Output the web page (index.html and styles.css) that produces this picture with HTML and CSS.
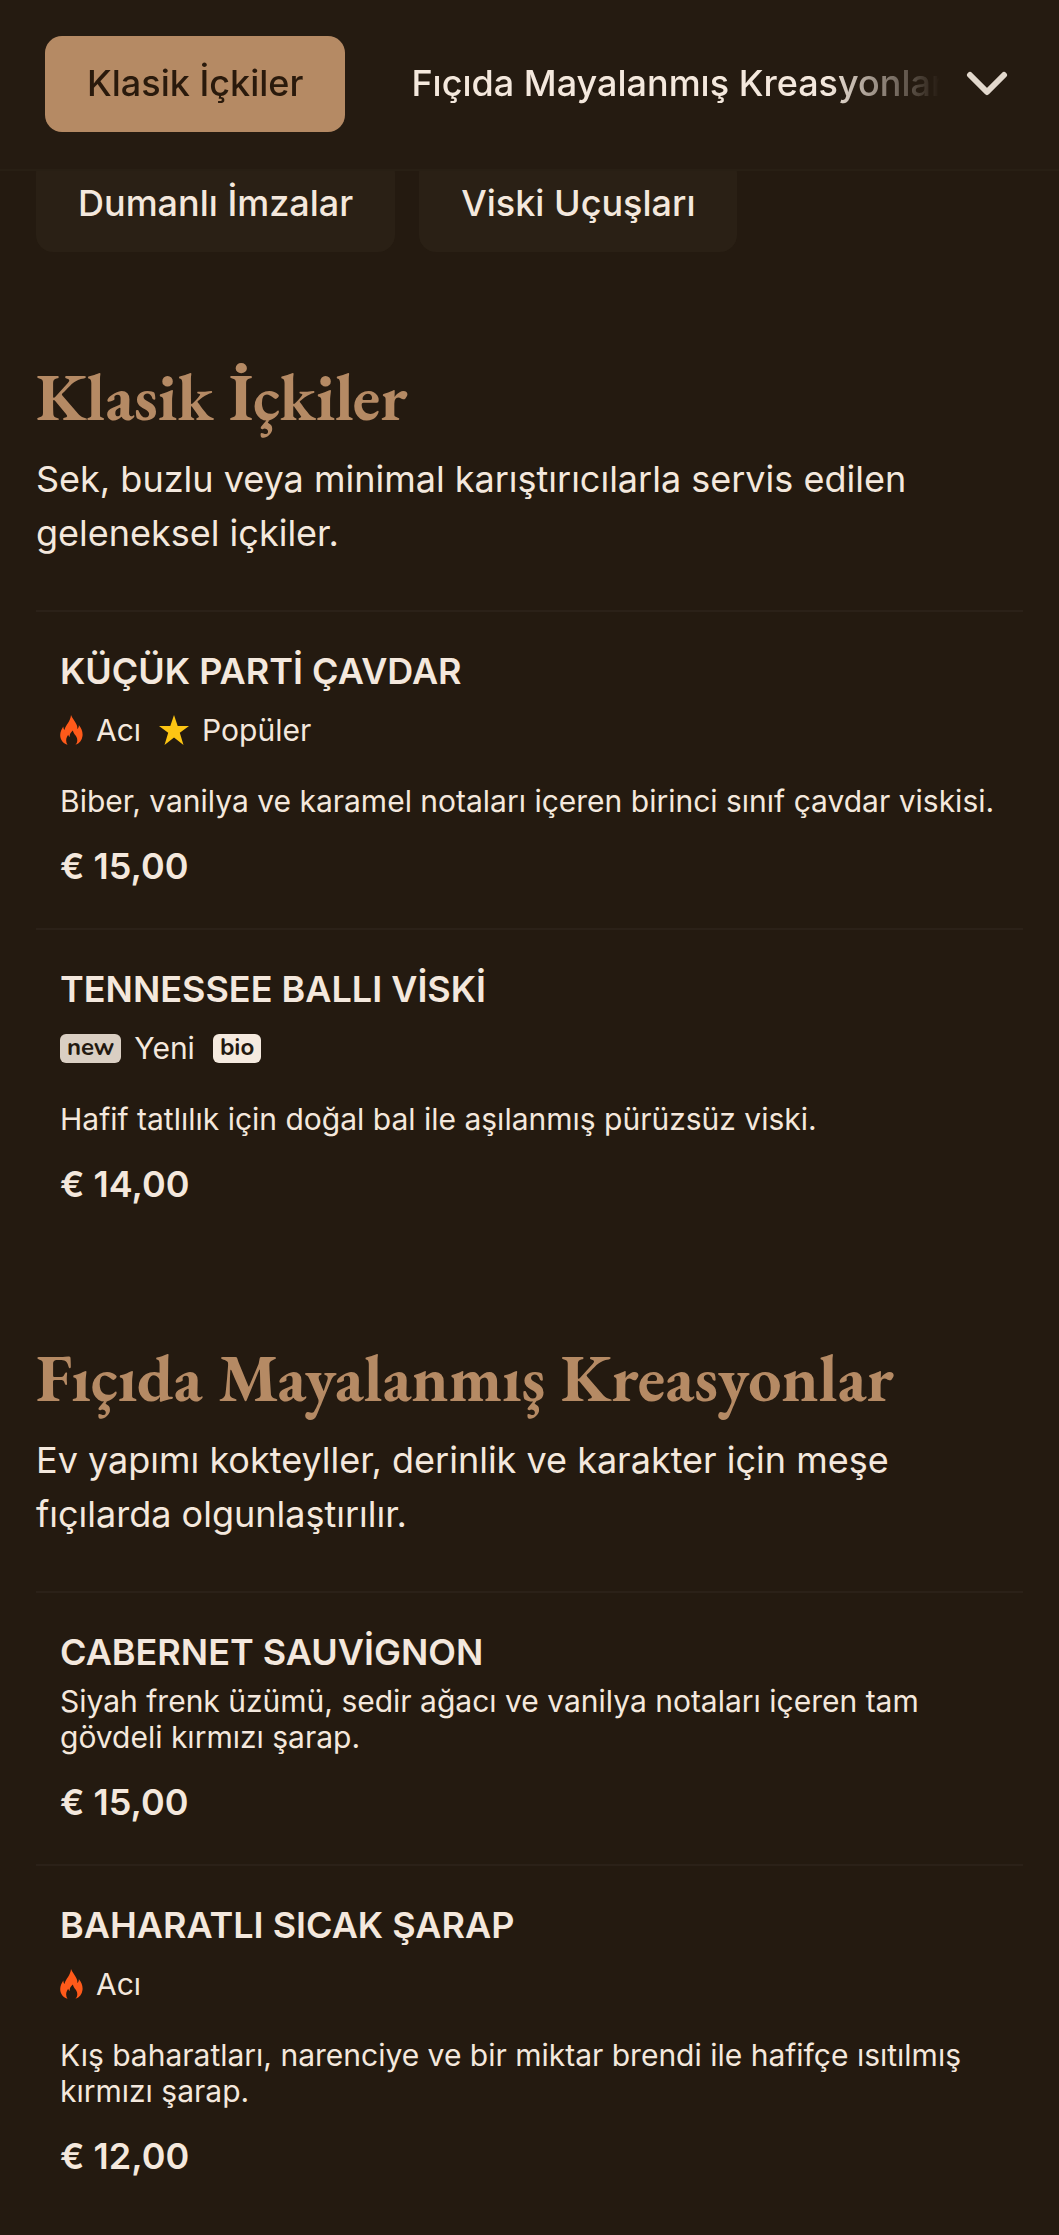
FILE: index.html
```html
<!DOCTYPE html>
<html lang="tr">
<head>
    <meta charset="UTF-8">
    <meta name="viewport" content="width=device-width, initial-scale=1.0">
    <title>Klasik İçkiler</title>
    <link rel="stylesheet" href="styles.css">
</head>
<body>

<!-- shared icons -->
<svg class="sprite" aria-hidden="true">
    <symbol id="flame" viewBox="0 0 23 30">
        <path fill="#ff5a1a" d="M11 0C12 3 15 6 16.500 9.500C17.300 11 17.500 12.500 17.300 14C18.500 13 19 11.500 18.800 10C21.500 13.500 23 17 22.500 21C22 25.500 19.500 28.500 15.500 29.800C17.500 27.500 17.800 24.500 16.500 22C15.500 20 13.500 18.500 12.800 15.500C10.500 17.500 9.500 19.500 9.700 22C8.800 21.500 8.400 20.700 8.300 19.800C6 22.500 5.300 26.500 7.500 29.800C3.500 28.500 .8 25.500 .3 21.500C-.2 17.500 1.500 14.500 3.300 11.500C3.400 13 3.700 14 4.500 15C5.800 9.500 10.500 6.500 11 0Z"/>
    </symbol>
    <symbol id="star" viewBox="0 0 30 30">
        <path fill="#fdc513" d="M15 0L18.700 11H30L20.800 17.700L24.500 30L15 22.500L5.500 30L9.200 17.700L0 11H11.300Z"/>
    </symbol>
</svg>

<header class="topbar">
    <nav class="tabs">
        <a class="tab active" href="#klasik">Klasik İçkiler</a>
        <a class="tab" href="#fici">Fıçıda Mayalanmış Kreasyonlar</a>
    </nav>
    <button class="toggle" type="button" aria-label="Kategoriler">
        <svg width="42" height="26" viewBox="0 0 42 26" aria-hidden="true">
            <path d="M4 4L21 21L38 4" fill="none" stroke="currentColor" stroke-width="6" stroke-linecap="round" stroke-linejoin="round"/>
        </svg>
    </button>
</header>

<main class="menu">
    <nav class="chips">
        <a class="chip" href="#dumanli">Dumanlı İmzalar</a>
        <a class="chip" href="#viski">Viski Uçuşları</a>
    </nav>

    <section class="category" id="klasik">
        <h2>Klasik İçkiler</h2>
        <p class="intro">Sek, buzlu veya minimal karıştırıcılarla servis edilen geleneksel içkiler.</p>

        <article class="item">
            <h3>KÜÇÜK PARTİ ÇAVDAR</h3>
            <ul class="labels">
                <li><svg class="flame" aria-hidden="true"><use href="#flame"/></svg>Acı</li>
                <li><svg class="star" aria-hidden="true"><use href="#star"/></svg>Popüler</li>
            </ul>
            <p class="desc">Biber, vanilya ve karamel notaları içeren birinci sınıf çavdar viskisi.</p>
            <p class="price">€ 15,00</p>
        </article>

        <article class="item">
            <h3>TENNESSEE BALLI VİSKİ</h3>
            <ul class="labels">
                <li><span class="badge badge-new">new</span>Yeni</li>
                <li><span class="badge">bio</span></li>
            </ul>
            <p class="desc">Hafif tatlılık için doğal bal ile aşılanmış pürüzsüz viski.</p>
            <p class="price">€ 14,00</p>
        </article>
    </section>

    <section class="category" id="fici">
        <h2>Fıçıda Mayalanmış Kreasyonlar</h2>
        <p class="intro">Ev yapımı kokteyller, derinlik ve karakter için meşe fıçılarda olgunlaştırılır.</p>

        <article class="item">
            <h3>CABERNET SAUVİGNON</h3>
            <p class="desc">Siyah frenk üzümü, sedir ağacı ve vanilya notaları içeren tam gövdeli kırmızı şarap.</p>
            <p class="price">€ 15,00</p>
        </article>

        <article class="item">
            <h3>BAHARATLI SICAK ŞARAP</h3>
            <ul class="labels">
                <li><svg class="flame" aria-hidden="true"><use href="#flame"/></svg>Acı</li>
            </ul>
            <p class="desc">Kış baharatları, narenciye ve bir miktar brendi ile hafifçe ısıtılmış kırmızı şarap.</p>
            <p class="price">€ 12,00</p>
        </article>
    </section>
</main>

</body>
</html>
```
FILE: styles.css
```css
:root { --bg: #241a10; --surface: #2a2015; --line: #2b2118; --text: #f4e8dd; --accent: #b58a64; }

* { box-sizing: border-box; margin: 0; padding: 0; }
body { font-family: Inter, sans-serif; font-size: 36px; background: var(--bg); color: var(--text); }
a { color: inherit; text-decoration: none; }
.sprite { display: none; }

/* Top bar */
.topbar { position: fixed; top: 0; left: 0; right: 0; z-index: 10; display: flex; align-items: center; height: 171px; padding: 0 51px 2px 45px; background: #251b11; border-bottom: 2px solid #281f14; }
.tabs { flex: 1; min-width: 0; display: flex; gap: 24px; overflow: hidden; mask-image: linear-gradient(to right, #000 calc(100% - 120px), transparent calc(100% - 8px)); }
.tab { flex: none; padding: 25px 42px 27px; line-height: 44px; font-weight: 500; border-radius: 17px; white-space: nowrap; }
.tab.active { background: var(--accent); color: #2a1a0c; }
.toggle { flex: none; display: flex; margin-left: 18px; background: none; border: none; color: #e2d8cd; cursor: pointer; }

/* Category chips */
.menu { padding: 156px 36px 0; }
.chips { display: flex; flex-wrap: wrap; gap: 24px; }
.chip { padding: 25px 42px 27px; line-height: 44px; font-weight: 500; background: var(--surface); border-radius: 17px; }

/* Sections */
.category { padding-top: 105px; }
.category + .category { padding-top: 92px; }
h2 { font-family: "EB Garamond", "Liberation Serif", serif; font-size: 66px; line-height: 80px; font-weight: 700; color: var(--accent); }
.intro { margin: 15px 0 50px; line-height: 54px; }

/* Menu items */
.item { padding: 37px 24px 40px; border-top: 2px solid var(--line); }
h3 { font-size: 36px; line-height: 44px; font-weight: 600; }
.labels { display: flex; gap: 18px; margin-top: 19px; list-style: none; font-size: 30px; line-height: 36px; }
.labels li { display: flex; align-items: center; gap: 13px; }
.flame { width: 23px; height: 30px; }
.star { width: 30px; height: 30px; }
.badge { padding: 0 7px 2px; font-family: Nunito, "Open Sans", sans-serif; font-size: 24px; line-height: 27px; font-weight: 700; background: #f5eadf; color: #231910; border-radius: 6px; }
.badge-new { background: #dacfc3; }
.desc { margin-top: 9px; font-size: 30px; line-height: 36px; }
.labels + .desc { margin-top: 35px; }
.price { margin-top: 25px; line-height: 44px; font-weight: 600; }
```
